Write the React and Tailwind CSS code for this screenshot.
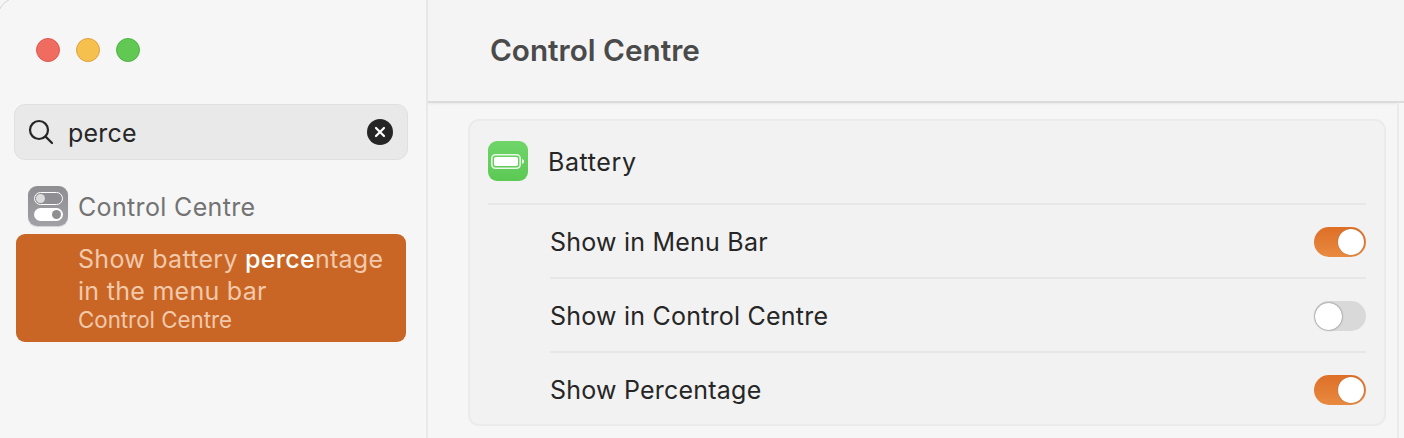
import React from "react";

function Toggle({ on }) {
  return on ? (
    <div className="w-[52px] h-[30px] rounded-full bg-gradient-to-b from-[#de6f27] to-[#e88a3f] flex items-center justify-end pr-[2px] shrink-0">
      <div className="w-[26px] h-[26px] rounded-full bg-white shadow-[0_0_1px_rgba(0,0,0,0.4)]" />
    </div>
  ) : (
    <div className="w-[52px] h-[30px] rounded-full bg-[#d9d9d9] flex items-center pl-[1px] shrink-0">
      <div className="w-[27px] h-[27px] rounded-full bg-white shadow-[0_0_2px_rgba(0,0,0,0.6)]" />
    </div>
  );
}

function Row({ label, on, last, textPad, togglePad }) {
  return (
    <div className={"h-[74px] flex items-center justify-between " + (last ? "" : "border-b-2 border-[#e7e7e7]")}>
      <span className={"text-[25px] tracking-[0.22px] text-[#262626] " + textPad}>{label}</span>
      <div className={togglePad}>
        <Toggle on={on} />
      </div>
    </div>
  );
}

export default function App() {
  return (
    <div className="relative w-[1404px] h-[438px] overflow-hidden flex bg-[#f6f6f6] font-['Inter','Liberation_Sans',sans-serif]">
      <svg width="12" height="12" viewBox="0 0 12 12" fill="none" className="absolute left-0 top-0">
        <path d="M0 9 C1.5 5 5 1.5 9 0" stroke="#d4d4d4" strokeWidth="1" />
      </svg>
      <aside className="w-[426px] shrink-0 flex flex-col border-r-2 border-[#e9e9e9] box-content bg-[#f6f6f6]">
        <div className="flex gap-[16px] pl-[36px] pt-[38px]">
          <div className="w-[24px] h-[24px] rounded-full bg-[#f06b60] border border-[#dc5a50]" />
          <div className="w-[24px] h-[24px] rounded-full bg-[#f6c04f] border border-[#dfa33a]" />
          <div className="w-[24px] h-[24px] rounded-full bg-[#60c853] border border-[#50b345]" />
        </div>
        <div className="mt-[42px] mx-[14px] w-[394px] h-[56px] rounded-[11px] bg-[#e9e9e9] border border-[#e0e0e0] flex items-center pl-[13px] pr-[12px]">
          <svg width="26" height="26" viewBox="0 0 26 26" fill="none" stroke="#262626" strokeWidth="2.2" strokeLinecap="round" className="shrink-0">
            <circle cx="11" cy="11" r="9" />
            <path d="M17.6 17.6 L24 24" />
          </svg>
          <span className="ml-[14px] pt-[3px] text-[25px] tracking-[0.2px] text-[#262626] flex-1">perce</span>
          <div className="w-[26px] h-[26px] rounded-full bg-[#262626] flex items-center justify-center mr-[2px]">
            <svg width="12" height="12" viewBox="0 0 12 12" stroke="#fff" strokeWidth="2.2" strokeLinecap="round">
              <path d="M2 2 L10 10 M10 2 L2 10" />
            </svg>
          </div>
        </div>
        <div className="mt-[26px] ml-[28px] flex items-center gap-[10px] h-[40px]">
          <div className="w-[40px] h-[40px] rounded-[9px] bg-gradient-to-b from-[#8e8e93] to-[#a0a0a5] shadow-[0_1px_1px_rgba(0,0,0,0.15)] flex flex-col items-center justify-center gap-[3px] shrink-0">
            <div className="w-[29px] h-[13px] rounded-full border-[1.5px] border-white bg-[#8e8e93] flex items-center pl-[1px]">
              <div className="w-[9px] h-[9px] rounded-full bg-[#dcdcdc]" />
            </div>
            <div className="w-[29px] h-[13px] rounded-full bg-white flex items-center justify-end pr-[2px]">
              <div className="w-[9px] h-[9px] rounded-full bg-[#8e8e93]" />
            </div>
          </div>
          <span className="pt-[4px] text-[25px] tracking-[0.35px] text-[#737373]">Control Centre</span>
        </div>
        <div className="mt-[8px] ml-[16px] w-[390px] h-[108px] rounded-[9px] bg-[#c96626] pl-[62px] pt-[9px]">
          <div className="text-[25px] leading-[32px] tracking-[0.28px] text-[#f2c9ab]">
            Show battery <span className="text-white font-medium">perce</span>ntage
            <br />
            in the menu bar
          </div>
          <div className="text-[22.3px] leading-[26px] text-[#f2c9ab]">Control Centre</div>
        </div>
      </aside>
      <main className="flex-1 flex flex-col min-w-0">
        <header className="h-[103px] shrink-0 bg-[#f4f4f4] border-b-2 border-[#dcdcdc] shadow-[0_1px_2px_rgba(0,0,0,0.06)] flex items-center pl-[62px]">
          <h1 className="text-[29.7px] font-semibold text-[#4a4a4a]">Control Centre</h1>
        </header>
        <div className="flex-1 flex">
          <div className="flex-1 pl-[40px] pr-[10px] pt-[16px]">
            <section className="w-[918px] h-[307px] rounded-[11px] bg-[#f2f2f2] border-2 border-[#ebebeb] px-[18px]">
              <div className="h-[84px] flex items-center gap-[20px] border-b-2 border-[#e7e7e7]">
                <div className="w-[40px] h-[40px] mb-[2px] rounded-[9px] bg-gradient-to-b from-[#6fd569] to-[#5cc954] flex items-center justify-center shrink-0">
                  <svg width="34" height="15" viewBox="0 0 34 15" fill="none">
                    <rect x="0.8" y="0.8" width="28.4" height="13.4" rx="3.6" stroke="#fff" strokeOpacity="0.85" strokeWidth="1.6" />
                    <rect x="3" y="3" width="24" height="9" rx="1.8" fill="#fff" />
                    <path d="M31 5 C32.5 5.5 33 6.5 33 7.5 C33 8.5 32.5 9.5 31 10 Z" fill="#fff" fillOpacity="0.85" />
                  </svg>
                </div>
                <span className="pt-[1px] text-[25px] tracking-[0.6px] text-[#262626]">Battery</span>
              </div>
              <div className="ml-[62px]">
                <Row label="Show in Menu Bar" on textPad="pt-[3px]" togglePad="pt-[2px]" />
                <Row label="Show in Control Centre" textPad="pt-[3px]" togglePad="pt-[2px]" />
                <Row label="Show Percentage" on last textPad="pt-[2px]" togglePad="pt-0" />
              </div>
            </section>
          </div>
          <div className="w-[7px] shrink-0 border-l-2 border-[#ebebeb] bg-[#f6f6f6]" />
        </div>
      </main>
    </div>
  );
}
